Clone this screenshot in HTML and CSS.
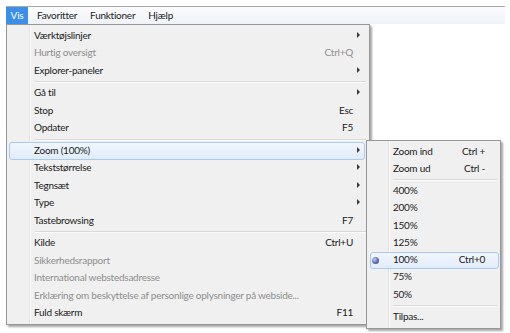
FILE: index.html
```html
<!DOCTYPE html>
<html lang="da">
<head>
    <meta charset="UTF-8">
    <meta name="viewport" content="width=device-width, initial-scale=1.0">
    <link rel="stylesheet" href="styles.css">
    <title>Vis-menu</title>
</head>
<body>
    <div class="menubar">
        <span class="topItem active">Vis</span>
        <span class="topItem">Favoritter</span>
        <span class="topItem">Funktioner</span>
        <span class="topItem">Hjælp</span>
    </div>

    <div class="menu mainMenu">
        <div class="item"><span class="label">Værktøjslinjer</span><span class="key"></span><span class="arrow on"></span></div>
        <div class="item disabled"><span class="label">Hurtig oversigt</span><span class="key">Ctrl+Q</span><span class="arrow"></span></div>
        <div class="item"><span class="label">Explorer-paneler</span><span class="key"></span><span class="arrow on"></span></div>
        <div class="sep"></div>
        <div class="item"><span class="label">Gå til</span><span class="key"></span><span class="arrow on"></span></div>
        <div class="item"><span class="label">Stop</span><span class="key">Esc</span><span class="arrow"></span></div>
        <div class="item"><span class="label">Opdater</span><span class="key">F5</span><span class="arrow"></span></div>
        <div class="sep"></div>
        <div class="item hot"><span class="label">Zoom (100%)</span><span class="key"></span><span class="arrow on"></span></div>
        <div class="item"><span class="label">Tekststørrelse</span><span class="key"></span><span class="arrow on"></span></div>
        <div class="item"><span class="label">Tegnsæt</span><span class="key"></span><span class="arrow on"></span></div>
        <div class="item"><span class="label">Type</span><span class="key"></span><span class="arrow on"></span></div>
        <div class="item"><span class="label">Tastebrowsing</span><span class="key">F7</span><span class="arrow"></span></div>
        <div class="sep"></div>
        <div class="item"><span class="label">Kilde</span><span class="key">Ctrl+U</span><span class="arrow"></span></div>
        <div class="item disabled"><span class="label">Sikkerhedsrapport</span><span class="key"></span><span class="arrow"></span></div>
        <div class="item disabled"><span class="label">International webstedsadresse</span><span class="key"></span><span class="arrow"></span></div>
        <div class="item disabled"><span class="label">Erklæring om beskyttelse af personlige oplysninger på webside...</span><span class="key"></span><span class="arrow"></span></div>
        <div class="item"><span class="label">Fuld skærm</span><span class="key">F11</span><span class="arrow"></span></div>
    </div>

    <div class="menu subMenu">
        <div class="item"><span class="label">Zoom ind</span><span class="key">Ctrl +</span></div>
        <div class="item"><span class="label">Zoom ud</span><span class="key">Ctrl -</span></div>
        <div class="sep"></div>
        <div class="item"><span class="label">400%</span></div>
        <div class="item"><span class="label">200%</span></div>
        <div class="item"><span class="label">150%</span></div>
        <div class="item"><span class="label">125%</span></div>
        <div class="item hot"><span class="radio"></span><span class="label">100%</span><span class="key">Ctrl+0</span></div>
        <div class="item"><span class="label">75%</span></div>
        <div class="item"><span class="label">50%</span></div>
        <div class="sep"></div>
        <div class="item"><span class="label">Tilpas...</span></div>
    </div>
</body>
</html>
```

FILE: styles.css
```css
:root {
    --menu-bg: #f0f0f0;
    --menu-border: #979797;
    --text: #1b1b1b;
    --text-disabled: #8e8e8e;
    --hot-border: #aacbf0;
}

body {
    margin: 0;
    background-color: white;
    font-family: 'Lato', 'Noto Sans', sans-serif;
    font-size: 10px;
    letter-spacing: -0.25px;
    color: var(--text);
}

.menubar {
    margin: 6px 5px 0 6px;
    height: 17px;
    border-top: 1px solid #a9a9a9;
    background: linear-gradient(#fbfcfd, #eef2f7);
    display: flex;
    align-items: stretch;
}

.topItem {
    display: flex;
    align-items: center;
    padding: 0 4px 1px;
    margin-right: 5px;
}

.topItem.active {
    width: 22px;
    padding: 0 0 1px;
    justify-content: center;
    background-color: #3b8fe8;
    color: white;
}

.menu {
    position: absolute;
    background-color: var(--menu-bg);
    border: 1px solid var(--menu-border);
    box-shadow: 2px 2px 2px rgba(0, 0, 0, 0.35);
    padding: 2px 0;
}

.mainMenu {
    left: 6px;
    top: 24px;
    width: 362px;
    background: linear-gradient(to right, var(--menu-bg) 22px, #e3e3e3 22px, #e3e3e3 23px, #fbfbfb 23px, #fbfbfb 24px, var(--menu-bg) 24px);
}

.subMenu {
    left: 366px;
    top: 140px;
    width: 133px;
    background: linear-gradient(to right, var(--menu-bg) 21px, #e3e3e3 21px, #e3e3e3 22px, #fbfbfb 22px, #fbfbfb 23px, var(--menu-bg) 23px);
}

.item {
    position: relative;
    display: flex;
    align-items: center;
    box-sizing: border-box;
    white-space: nowrap;
    border: 1px solid transparent;
    border-radius: 3px;
    padding-bottom: 2px;
}

.mainMenu .item {
    height: 17.5px;
    margin: 0 4px 0 2px;
    padding-left: 24px;
}

.subMenu .item {
    height: 17.25px;
    margin: 0 1px 0 3px;
    padding-left: 22px;
    padding-right: 13px;
}

.item.hot {
    border-color: var(--hot-border);
    background: linear-gradient(#f1f6fd, #e1ecfa);
}

.item.disabled {
    color: var(--text-disabled);
}

.key {
    margin-left: auto;
}

.arrow {
    width: 11px;
    flex-shrink: 0;
    display: flex;
    align-items: center;
}

.arrow.on::before {
    content: '';
    margin-left: 4px;
    border-left: 3px solid #3a3a3a;
    border-top: 3px solid transparent;
    border-bottom: 3px solid transparent;
}

.sep {
    height: 5px;
    display: flex;
    align-items: center;
}

.sep::before {
    content: '';
    display: block;
    height: 1px;
    width: 100%;
    border-top: 1px solid #d9d9d9;
    background-color: #fbfbfb;
}

.mainMenu .sep {
    margin-left: 28px;
    margin-right: 3px;
}

.subMenu .sep {
    margin-left: 26px;
    margin-right: 3px;
}

.radio {
    position: absolute;
    left: 1px;
    top: 4px;
    width: 7px;
    height: 7px;
    border-radius: 50%;
    background: radial-gradient(circle at 35% 35%, #c6cdf0, #5b63a8 60%, #3d4380);
}
```
